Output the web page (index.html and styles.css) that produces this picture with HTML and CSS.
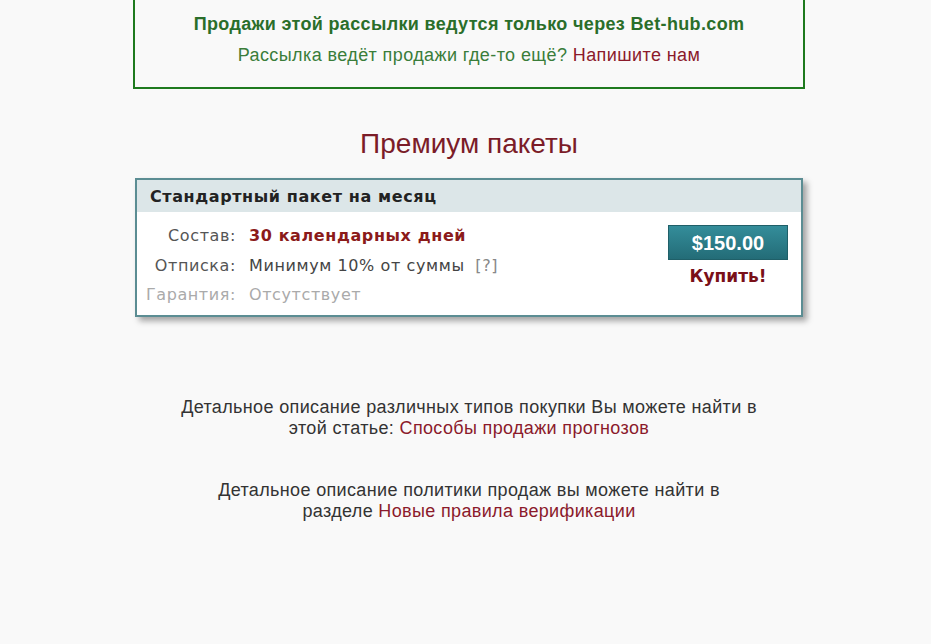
FILE: index.html
```
<!DOCTYPE html>
<html lang="ru">
<head>
    <meta charset="UTF-8">
    <meta name="viewport" content="width=device-width, initial-scale=1.0">
    <title>Премиум пакеты</title>
    <link rel="stylesheet" href="styles.css">
</head>
<body>
    <div class="wrap">

        <!-- Уведомление о продажах -->
        <div class="sales-note">
            <p class="sales-main">Продажи этой рассылки ведутся только через Bet-hub.com</p>
            <p class="sales-sub">Рассылка ведёт продажи где-то ещё? <a href="#">Напишите нам</a></p>
        </div>

        <h2 class="section-title">Премиум пакеты</h2>

        <!-- Пакет -->
        <div class="package">
            <div class="package-head">Стандартный пакет на месяц</div>
            <div class="package-body">
                <div class="package-info">
                    <div class="info-row"><span class="info-label">Состав:</span><span class="info-value accent">30 календарных дней</span></div>
                    <div class="info-row"><span class="info-label">Отписка:</span><span class="info-value">Минимум 10% от суммы <span class="hint">[?]</span></span></div>
                    <div class="info-row muted"><span class="info-label">Гарантия:</span><span class="info-value">Отсутствует</span></div>
                </div>
                <div class="package-buy">
                    <div class="price">$150.00</div>
                    <a href="#" class="buy-link">Купить!</a>
                </div>
            </div>
        </div>

        <p class="desc">Детальное описание различных типов покупки Вы можете найти в<br>этой статье: <a href="#">Способы продажи прогнозов</a></p>
        <p class="desc">Детальное описание политики продаж вы можете найти в<br>разделе <a href="#">Новые правила верификации</a></p>

    </div>
</body>
</html>
```

FILE: styles.css
```
* { margin: 0; padding: 0; box-sizing: border-box; }
body { background: #f9f9f9; font-family: "Liberation Sans", Arial, sans-serif; color: #333; padding-left: 7px; overflow: hidden; }

a { color: #8b1a2b; text-decoration: none; }

.wrap {
    width: 672px;
    margin: 0 auto;
}

.sales-note {
    margin-top: -20px;
    border: 2px solid #1e7a1e;
    padding: 31px 10px 21px;
    text-align: center;
    color: #3a7d3a;
}

.sales-main {
    font-size: 18px;
    font-weight: bold;
    letter-spacing: 0.35px;
    color: #2a6e2a;
    line-height: 22px;
}

.sales-sub {
    font-size: 18px;
    letter-spacing: 0.4px;
    line-height: 22px;
    margin-top: 9px;
}

.section-title {
    font-size: 28px;
    font-weight: normal;
    color: #7b1c28;
    text-align: center;
    margin-top: 38px;
    line-height: 34px;
}

.package {
    margin: 17px 2px 0;
    background: #fff;
    border: 2px solid #5b8d93;
    box-shadow: 4px 4px 6px rgba(0, 0, 0, 0.35);
    font-family: "DejaVu Sans", Verdana, sans-serif;
    letter-spacing: 0.6px;
}

.package-head {
    background: #dce6e8;
    padding: 0 13px;
    height: 32px;
    line-height: 34px;
    font-size: 16px;
    font-weight: bold;
    color: #222;
}

.package-body {
    display: flex;
    justify-content: space-between;
    padding: 9px 13px 5px 8px;
}

.info-row {
    display: flex;
    font-size: 16px;
    line-height: 29.5px;
    color: #444;
}

.info-label {
    width: 91px;
    text-align: right;
    margin-right: 13px;
    color: #555;
}

.info-value.accent {
    font-weight: bold;
    color: #8b1a1a;
}

.hint { color: #888; margin-left: 5px; }

.info-row.muted .info-label,
.info-row.muted .info-value { color: #aaa; }

.package-buy {
    width: 120px;
    text-align: center;
    padding-top: 4px;
    letter-spacing: 0;
}

.price {
    height: 35px;
    line-height: 35px;
    background: linear-gradient(#348d9a, #236c77);
    color: #fff;
    font-family: "Liberation Sans", Arial, sans-serif;
    font-size: 20px;
    font-weight: bold;
    border: 1px solid #1f5f68;
}

.buy-link {
    display: block;
    margin-top: 6px;
    font-size: 17px;
    line-height: 20px;
    font-weight: bold;
    color: #7a1018;
}

.desc {
    margin-top: 80px;
    text-align: center;
    font-size: 18px;
    letter-spacing: 0.35px;
    line-height: 21px;
    color: #333;
}

.desc + .desc { margin-top: 41px; }
```
